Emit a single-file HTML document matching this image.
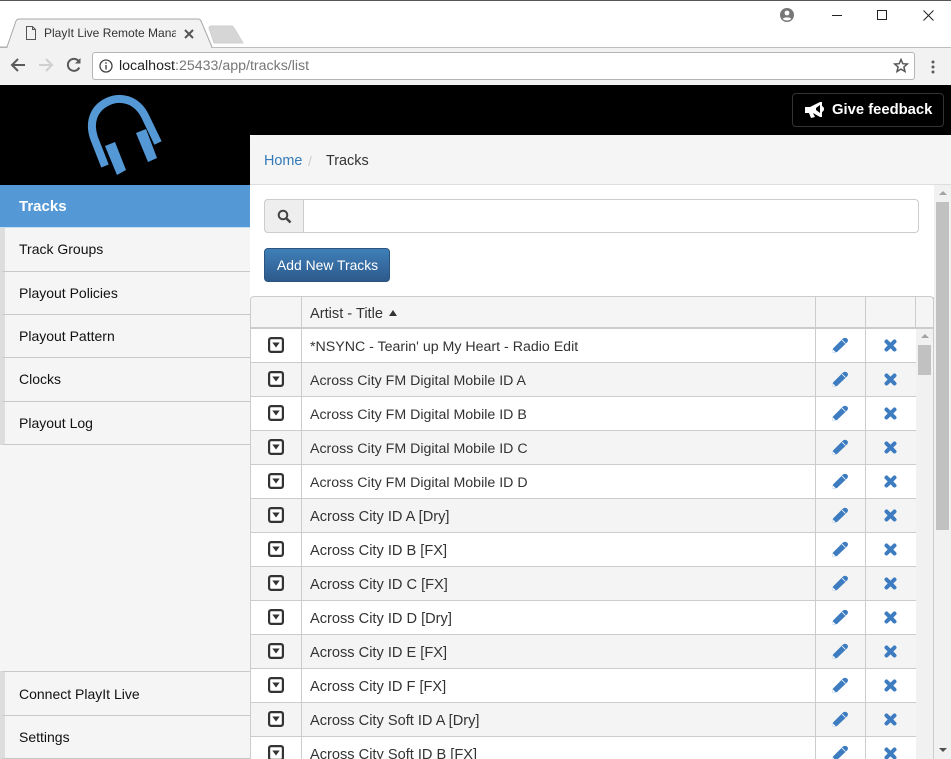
<!DOCTYPE html>
<html><head><meta charset="utf-8"><title>PlayIt Live Remote Management</title>
<style>
html,body{margin:0;padding:0;width:951px;height:759px;overflow:hidden;background:#fff;font-family:"Liberation Sans",sans-serif;font-size:14px;color:#333}
div,a,span,svg{position:absolute;box-sizing:border-box;white-space:nowrap}
#w{left:0;top:0;width:951px;height:759px;overflow:hidden}
.mi{left:0;width:250px;background:#f5f5f5;border-left:5px solid #ddd;border-bottom:1px solid #c8c8c8;color:#111}
.mi span{left:14px;top:11px;line-height:20px}
.row{left:251px;width:665px;height:34px;border-bottom:1px solid #ccc;background:#fff}
.row.a{background:#f4f4f4}
.row span{left:59px;top:8px;line-height:20px;color:#333;font-size:14.6px}
.row span.f{font-size:14.2px}
.cv{left:50px;top:0;width:1px;height:100%;background:#ccc}
.chk{left:17px;top:8px}
.pen{left:581px;top:8px}
.x{left:633px;top:10px}
</style></head><body><div id="w">

<div style="left:0;top:0;width:951px;height:1px;background:#555"></div>
<div style="left:0;top:47px;width:951px;height:38px;background:#f2f2f2;border-top:1px solid #bdbdbd"></div>
<svg style="left:0;top:15px" width="250" height="35"><path d="M0 32H7L16 6Q17 4 19 4H198Q200 4 201 6L212 32" fill="#f2f2f2" stroke="#a8a8a8"/><path d="M7.500 32H211v3H7.500z" fill="#f2f2f2"/><path d="M209 13Q209 11 212 11H231Q233 11 234 13L243 28H214Z" fill="#d6d6d6" stroke="#cfcfcf"/></svg>
<svg style="left:25px;top:26px" width="12" height="15" fill="none" stroke="#555"><path d="M1.500.5H7.500L10.500 3.500V13.500H1.500ZM7.500.5V3.500H10.500"/></svg>
<span style="left:44px;top:26px;font-size:12px;line-height:15px;color:#333;width:132px;overflow:hidden">PlayIt Live Remote Manag</span>
<svg style="left:184px;top:29px" width="10" height="10" stroke="#555" stroke-width="2"><path d="M1 1L9 9M9 1L1 9"/></svg>
<svg style="left:10px;top:57px" width="16" height="16" fill="none" stroke="#5a5a5a" stroke-width="2"><path d="M15 8H2M8 2L2 8L8 14"/></svg>
<svg style="left:38px;top:57px" width="16" height="16" fill="none" stroke="#cfcfcf" stroke-width="2"><path d="M1 8H14M8 2L14 8L8 14"/></svg>
<svg style="left:66px;top:57px" width="16" height="16" fill="none" stroke="#5a5a5a" stroke-width="2"><path d="M13.300 10.500A6 6 0 1 1 12.500 4"/><path d="M14.500 1V6.500H9" fill="#5a5a5a" stroke="none"/></svg>
<div style="left:92px;top:52px;width:823px;height:28px;background:#fff;border:1px solid #b5b5b5;border-radius:3px"></div>
<svg style="left:99px;top:59px" width="14" height="14"><circle cx="7" cy="7" r="6" fill="none" stroke="#444" stroke-width="1.300"/><path d="M6.300 6h1.400v4.500H6.300zM6.300 3.300h1.400v1.500H6.300z" fill="#444"/></svg>
<span style="left:119px;top:57px;font-size:14.200px;line-height:18px;color:#777"><b style="font-weight:normal;color:#222">localhost</b>:25433/app/tracks/list</span>
<svg style="left:893px;top:58px" width="16" height="15" fill="none" stroke="#555" stroke-width="1.500"><path d="M8 1.500L9.800 5.700L14.300 6L10.900 9L12 13.500L8 11.100L4 13.500L5.100 9L1.700 6L6.200 5.700Z"/></svg>
<svg style="left:931px;top:60px" width="4" height="14" fill="#5a5a5a"><circle cx="2" cy="2" r="1.500"/><circle cx="2" cy="7" r="1.500"/><circle cx="2" cy="12" r="1.500"/></svg>
<svg style="left:780px;top:8px" width="14" height="14"><circle cx="7" cy="7" r="7" fill="#777"/><circle cx="7" cy="5" r="2.400" fill="#fff"/><path d="M2.800 11C3.500 8.800 10.500 8.800 11.200 11C9 13 5 13 2.800 11Z" fill="#fff"/></svg>
<div style="left:832px;top:15px;width:10px;height:1px;background:#222"></div>
<div style="left:877px;top:10px;width:10px;height:10px;border:1px solid #222"></div>
<svg style="left:923px;top:10px" width="11" height="11" stroke="#222"><path d="M.5.500L10.500 10.500M10.500.500L.5 10.500"/></svg>

<div style="left:0;top:85px;width:951px;height:50px;background:#000"></div>
<div style="left:0;top:135px;width:250px;height:50px;background:#000"></div>
<svg style="left:71px;top:85px" width="110" height="100"><path d="M34 81L23 53C18 38 22 24 36 17C50 10 66 15 74 31L87 58" fill="none" stroke="#5499d6" stroke-width="8"/><path d="M34 61L44 57L55 85L46 90ZM65 48L75 44L86 73L77 77Z" fill="#5499d6"/></svg>
<div style="left:792px;top:93px;width:152px;height:34px;background:#000;border:1px solid #333;border-radius:4px"></div>
<svg style="left:805px;top:101px" width="20" height="18"><path d="M0 6H5L15 1H17V5Q19 6 19 8Q19 10 17 11V16H15L8 12L10 16L6 17L4 12H0Z" fill="#fff"/><path d="M11 7L15 4V12L11 9Z" fill="#000"/></svg>
<span style="left:832px;top:101px;font-size:14.800px;font-weight:bold;line-height:18px;color:#fff">Give feedback</span>

<div style="left:0;top:185px;width:250px;height:574px;background:#f5f5f5"></div>
<div style="left:0;top:185px;width:250px;height:43px;background:#5499d6;border-bottom:1px solid #c8dff2"></div>
<span style="left:19px;top:197px;line-height:20px;color:#fff;font-weight:bold;font-size:15px">Tracks</span>
<div class="mi" style="top:228px;height:44px"><span>Track Groups</span></div>
<div class="mi" style="top:272px;height:43px"><span>Playout Policies</span></div>
<div class="mi" style="top:315px;height:43px"><span>Playout Pattern</span></div>
<div class="mi" style="top:358px;height:44px"><span>Clocks</span></div>
<div class="mi" style="top:402px;height:43px"><span>Playout Log</span></div>
<div class="mi" style="top:671px;height:45px;border-top:1px solid #c8c8c8"><span style="top:12px">Connect PlayIt Live</span></div>
<div class="mi" style="top:716px;height:43px"><span>Settings</span></div>

<div style="left:250px;top:135px;width:701px;height:624px;background:#fff"></div>
<div style="left:250px;top:135px;width:701px;height:50px;background:#f5f5f5;border-bottom:1px solid #ddd;border-top-left-radius:4px"></div>
<span style="left:264px;top:151px;line-height:20px;color:#337ab7;font-size:14.400px">Home</span>
<span style="left:308px;top:151px;line-height:20px;color:#ccc">/</span>
<span style="left:326px;top:151px;line-height:20px;color:#333;font-size:14.400px">Tracks</span>

<div style="left:264px;top:199px;width:655px;height:34px;background:#fff;border:1px solid #ccc;border-radius:4px"></div>
<div style="left:264px;top:199px;width:40px;height:34px;background:#eee;border:1px solid #ccc;border-radius:4px 0 0 4px"></div>
<svg style="left:277px;top:209px" width="15" height="15" fill="none" stroke="#444"><circle cx="6" cy="6" r="4.300" stroke-width="2"/><path d="M9 9L13.500 13.500" stroke-width="2.500"/></svg>

<div style="left:264px;top:248px;width:126px;height:34px;background:linear-gradient(#3f7fb8,#2d5a8c);border:1px solid #2b5580;border-radius:4px"></div>
<span style="left:277px;top:255px;line-height:20px;color:#fff;font-size:13.900px">Add New Tracks</span>

<div style="left:250px;top:296px;width:684px;height:33px;background:#f5f5f5;border:1px solid #ccc;border-bottom:2px solid #ccc;border-radius:4px 4px 0 0"></div>
<div style="left:250px;top:329px;width:1px;height:430px;background:#ccc"></div>
<div style="left:301px;top:297px;width:1px;height:32px;background:#ccc"></div>
<div style="left:815px;top:297px;width:1px;height:32px;background:#ccc"></div>
<div style="left:865px;top:297px;width:1px;height:32px;background:#ccc"></div>
<div style="left:915px;top:297px;width:1px;height:32px;background:#ccc"></div>
<span style="left:310px;top:304px;line-height:20px;color:#333;font-size:14.600px">Artist - Title</span>
<svg style="left:389px;top:310px" width="8" height="7" fill="#333"><path d="M4 0L8 6H0Z"/></svg>

<svg width="0" height="0" style="left:0;top:0"><defs>
<g id="c"><rect x="1.100" y="1.100" width="13.800" height="13.800" rx="2" fill="#fff" stroke="#333" stroke-width="2.200"/><path d="M4.300 5.500H11.700L8 10.500Z" fill="#333"/></g>
<g id="p"><path d="M0 16L1 11.500L11 1.500Q13 0 15 1.500T15 5.500L5 15Z" fill="#3d7cc0"/><path d="M0 16L1 12.500L3.500 15Z" fill="#fff"/><path d="M10 3L13.500 6.500" stroke="#fff" stroke-width=".8"/></g>
<g id="x"><path d="M2.500 2.500L10.500 10.500M10.500 2.500L2.500 10.500" stroke="#3d7cc0" stroke-width="4" stroke-linecap="round"/></g>
</defs></svg>

<div class="row" style="top:329px"><svg class="chk" width="16" height="16"><use href="#c"/></svg><div class="cv"></div><span class="f">*NSYNC - Tearin' up My Heart - Radio Edit</span><div class="cv" style="left:564px"></div><div class="cv" style="left:614px"></div><svg class="pen" width="16" height="16"><use href="#p"/></svg><svg class="x" width="13" height="13"><use href="#x"/></svg></div>
<div class="row a" style="top:363px"><svg class="chk" width="16" height="16"><use href="#c"/></svg><div class="cv"></div><span class="f">Across City FM Digital Mobile ID A</span><div class="cv" style="left:564px"></div><div class="cv" style="left:614px"></div><svg class="pen" width="16" height="16"><use href="#p"/></svg><svg class="x" width="13" height="13"><use href="#x"/></svg></div>
<div class="row" style="top:397px"><svg class="chk" width="16" height="16"><use href="#c"/></svg><div class="cv"></div><span class="f">Across City FM Digital Mobile ID B</span><div class="cv" style="left:564px"></div><div class="cv" style="left:614px"></div><svg class="pen" width="16" height="16"><use href="#p"/></svg><svg class="x" width="13" height="13"><use href="#x"/></svg></div>
<div class="row a" style="top:431px"><svg class="chk" width="16" height="16"><use href="#c"/></svg><div class="cv"></div><span class="f">Across City FM Digital Mobile ID C</span><div class="cv" style="left:564px"></div><div class="cv" style="left:614px"></div><svg class="pen" width="16" height="16"><use href="#p"/></svg><svg class="x" width="13" height="13"><use href="#x"/></svg></div>
<div class="row" style="top:465px"><svg class="chk" width="16" height="16"><use href="#c"/></svg><div class="cv"></div><span class="f">Across City FM Digital Mobile ID D</span><div class="cv" style="left:564px"></div><div class="cv" style="left:614px"></div><svg class="pen" width="16" height="16"><use href="#p"/></svg><svg class="x" width="13" height="13"><use href="#x"/></svg></div>
<div class="row a" style="top:499px"><svg class="chk" width="16" height="16"><use href="#c"/></svg><div class="cv"></div><span>Across City ID A [Dry]</span><div class="cv" style="left:564px"></div><div class="cv" style="left:614px"></div><svg class="pen" width="16" height="16"><use href="#p"/></svg><svg class="x" width="13" height="13"><use href="#x"/></svg></div>
<div class="row" style="top:533px"><svg class="chk" width="16" height="16"><use href="#c"/></svg><div class="cv"></div><span>Across City ID B [FX]</span><div class="cv" style="left:564px"></div><div class="cv" style="left:614px"></div><svg class="pen" width="16" height="16"><use href="#p"/></svg><svg class="x" width="13" height="13"><use href="#x"/></svg></div>
<div class="row a" style="top:567px"><svg class="chk" width="16" height="16"><use href="#c"/></svg><div class="cv"></div><span>Across City ID C [FX]</span><div class="cv" style="left:564px"></div><div class="cv" style="left:614px"></div><svg class="pen" width="16" height="16"><use href="#p"/></svg><svg class="x" width="13" height="13"><use href="#x"/></svg></div>
<div class="row" style="top:601px"><svg class="chk" width="16" height="16"><use href="#c"/></svg><div class="cv"></div><span>Across City ID D [Dry]</span><div class="cv" style="left:564px"></div><div class="cv" style="left:614px"></div><svg class="pen" width="16" height="16"><use href="#p"/></svg><svg class="x" width="13" height="13"><use href="#x"/></svg></div>
<div class="row a" style="top:635px"><svg class="chk" width="16" height="16"><use href="#c"/></svg><div class="cv"></div><span>Across City ID E [FX]</span><div class="cv" style="left:564px"></div><div class="cv" style="left:614px"></div><svg class="pen" width="16" height="16"><use href="#p"/></svg><svg class="x" width="13" height="13"><use href="#x"/></svg></div>
<div class="row" style="top:669px"><svg class="chk" width="16" height="16"><use href="#c"/></svg><div class="cv"></div><span>Across City ID F [FX]</span><div class="cv" style="left:564px"></div><div class="cv" style="left:614px"></div><svg class="pen" width="16" height="16"><use href="#p"/></svg><svg class="x" width="13" height="13"><use href="#x"/></svg></div>
<div class="row a" style="top:703px"><svg class="chk" width="16" height="16"><use href="#c"/></svg><div class="cv"></div><span>Across City Soft ID A [Dry]</span><div class="cv" style="left:564px"></div><div class="cv" style="left:614px"></div><svg class="pen" width="16" height="16"><use href="#p"/></svg><svg class="x" width="13" height="13"><use href="#x"/></svg></div>
<div class="row" style="top:737px"><svg class="chk" width="16" height="16"><use href="#c"/></svg><div class="cv"></div><span>Across City Soft ID B [FX]</span><div class="cv" style="left:564px"></div><div class="cv" style="left:614px"></div><svg class="pen" width="16" height="16"><use href="#p"/></svg><svg class="x" width="13" height="13"><use href="#x"/></svg></div>

<div style="left:916px;top:329px;width:17px;height:430px;background:#f1f1f1"></div>
<div style="left:918px;top:345px;width:13px;height:30px;background:#c1c1c1"></div>
<svg style="left:921px;top:334px" width="8" height="5" fill="#a3a3a3"><path d="M4 0L8 4H0Z"/></svg>
<div style="left:933px;top:297px;width:1px;height:462px;background:#ccc"></div>
<div style="left:934px;top:185px;width:17px;height:574px;background:#f1f1f1"></div>
<div style="left:936px;top:202px;width:13px;height:328px;background:#c1c1c1"></div>
<svg style="left:939px;top:191px" width="8" height="5" fill="#a3a3a3"><path d="M4 0L8 4H0Z"/></svg>
<svg style="left:939px;top:748px" width="8" height="5" fill="#505050"><path d="M0 0H8L4 4Z"/></svg>
</div></body></html>
